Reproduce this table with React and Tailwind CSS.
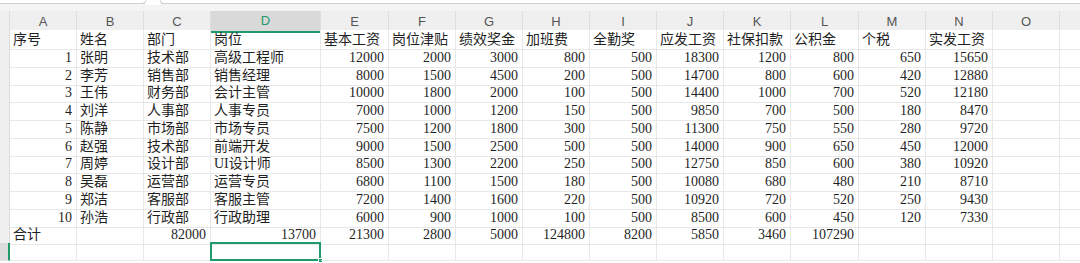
import React from 'react'

const cols = ['A', 'B', 'C', 'D', 'E', 'F', 'G', 'H', 'I', 'J', 'K', 'L', 'M', 'N', 'O']

const rows = [
  ['序号', '姓名', '部门', '岗位', '基本工资', '岗位津贴', '绩效奖金', '加班费', '全勤奖', '应发工资', '社保扣款', '公积金', '个税', '实发工资', ''],
  [1, '张明', '技术部', '高级工程师', 12000, 2000, 3000, 800, 500, 18300, 1200, 800, 650, 15650, ''],
  [2, '李芳', '销售部', '销售经理', 8000, 1500, 4500, 200, 500, 14700, 800, 600, 420, 12880, ''],
  [3, '王伟', '财务部', '会计主管', 10000, 1800, 2000, 100, 500, 14400, 1000, 700, 520, 12180, ''],
  [4, '刘洋', '人事部', '人事专员', 7000, 1000, 1200, 150, 500, 9850, 700, 500, 180, 8470, ''],
  [5, '陈静', '市场部', '市场专员', 7500, 1200, 1800, 300, 500, 11300, 750, 550, 280, 9720, ''],
  [6, '赵强', '技术部', '前端开发', 9000, 1500, 2500, 500, 500, 14000, 900, 650, 450, 12000, ''],
  [7, '周婷', '设计部', 'UI设计师', 8500, 1300, 2200, 250, 500, 12750, 850, 600, 380, 10920, ''],
  [8, '吴磊', '运营部', '运营专员', 6800, 1100, 1500, 180, 500, 10080, 680, 480, 210, 8710, ''],
  [9, '郑洁', '客服部', '客服主管', 7200, 1400, 1600, 220, 500, 10920, 720, 520, 250, 9430, ''],
  [10, '孙浩', '行政部', '行政助理', 6000, 900, 1000, 100, 500, 8500, 600, 450, 120, 7330, ''],
  ['合计', '', 82000, 13700, 21300, 2800, 5000, 124800, 8200, 5850, 3460, 107290, '', '', ''],
  ['', '', '', '', '', '', '', '', '', '', '', '', '', '', ''],
]

const grid = 'grid grid-cols-[10px_67px_67px_67px_110px_68px_67px_67px_67px_67px_67px_67px_68px_67px_67px_67px_1fr]'

const Row = ({ cells, selected }) => (
  <div className={`${grid} h-[17.75px]`}>
    <div className={`border-b border-[#e3e3e3] ${selected ? 'bg-[#dcdcdc] border-r-2 border-r-[#1f9a68]' : 'bg-[#f0f0f0] border-r border-r-[#dcdcdc]'}`}></div>
    {cells.map((c, i) => (
      <div
        key={i}
        className={`relative border-r border-b border-[#e8e8e8] overflow-visible whitespace-nowrap leading-[19px] ${typeof c === 'number' ? 'text-right pr-[4px]' : 'pl-[3px]'}`}
      >
        {c}
        {selected && i === 3 && (
          <>
            <div className="absolute -left-px -top-px w-[111px] h-[19px] border-2 border-[#1f9a68]"></div>
            <div className="absolute -right-[3px] top-[15px] w-[5px] h-[5px] bg-[#1f9a68] border border-white"></div>
          </>
        )}
      </div>
    ))}
    <div className="border-b border-[#e8e8e8]"></div>
  </div>
)

export default function App() {
  return (
    <div className="w-[1080px] h-[263px] overflow-hidden bg-white text-[14px] text-[#1f1f1f] font-['Liberation_Serif','Noto_Sans_CJK_SC',serif]">
      {/* top strip */}
      <div className="relative h-[4px] border-b border-[#cfcfcf] bg-white">
        <svg className="absolute left-[142px] top-0" width="22" height="5" viewBox="0 0 22 5">
          <rect x="3" y="0" width="16" height="5" fill="#fff" />
          <path d="M0 3.5 Q4 3.5 4 0 M18 0 Q18 3.5 22 3.5" stroke="#cfcfcf" fill="none" />
        </svg>
      </div>
      <div className="h-[7px] bg-[#f4f4f4]"></div>

      {/* column header */}
      <div className={`${grid} h-[19px] bg-[#efefef] font-['Liberation_Sans',sans-serif] text-[13px] text-[#555]`}>
        <div className="border-r border-[#dcdcdc]"></div>
        {cols.map((c) => (
          <div
            key={c}
            className={`flex items-center justify-center border-r border-[#dedede] ${c === 'D' ? 'bg-[#d9d9d9] text-[#1f9a68] border-b-2 border-b-[#1f9a68]' : ''}`}
          >
            {c}
          </div>
        ))}
        <div></div>
      </div>

      {rows.map((r, i) => (
        <Row key={i} cells={r} selected={i === rows.length - 1} />
      ))}
    </div>
  )
}
